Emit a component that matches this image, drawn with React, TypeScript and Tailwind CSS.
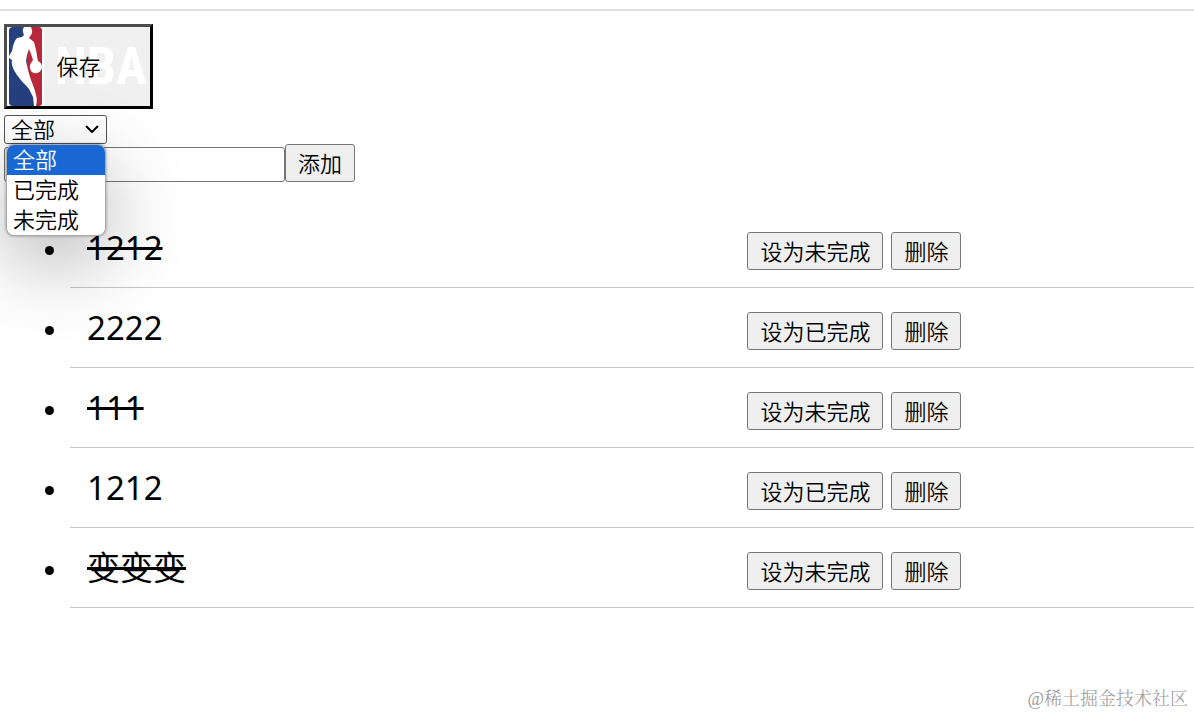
import { useState } from 'react'

const filters = ['全部', '已完成', '未完成']

const initialTodos = [
  { id: 1, text: '1212', done: true },
  { id: 2, text: '2222', done: false },
  { id: 3, text: '111', done: true },
  { id: 4, text: '1212', done: false },
  { id: 5, text: '变变变', done: true },
]

const buttonStyle =
  'rounded-[3px] border border-[#767676] bg-[#efefef] px-3 h-[38px] leading-[36px] text-[22px] hover:bg-[#e5e5e5]'

function NbaLogo() {
  return (
    <svg viewBox="0 0 33 79" className="h-full w-[33px] shrink-0" aria-hidden="true">
      <clipPath id="badge">
        <rect width="33" height="79" rx="4" />
      </clipPath>
      <g clipPath="url(#badge)">
        <rect width="33" height="79" fill="#253f7f" />
        <path d="M17 0H33V79H27L18 45Z" fill="#b9283a" />
        <path
          d="M15 0C13 3 14 5 15 8L13 10L8 11C5 14 4 19 3 24L0 29V31L3 33C2 37 4 42 8 48C12 54 16 57 20 62L24 70L25 79H27C28 75 28 71 27 68C26 63 24 58 22 53C21 50 20 47 19 43L17 34L18 28L20 22L22 27L24 33L22 36C20 39 21 43 23 45C27 48 33 45 33 40C33 37 31 35 29 34C28 31 28 27 27 23L25 15L20 11L22 8C24 5 23 3 22 0Z"
          fill="#fff"
        />
      </g>
    </svg>
  )
}

export default function App() {
  const [todos, setTodos] = useState(initialTodos)
  const [filter, setFilter] = useState('全部')
  const [open, setOpen] = useState(true)
  const [text, setText] = useState('')

  function addTodo() {
    if (!text) return
    setTodos([...todos, { id: Date.now(), text, done: false }])
    setText('')
  }

  function toggleTodo(id: number) {
    setTodos(todos.map((t) => (t.id === id ? { ...t, done: !t.done } : t)))
  }

  const visible = todos.filter((t) => filter === '全部' || t.done === (filter === '已完成'))

  return (
    <div className="flex min-h-screen flex-col bg-white pt-[9px] font-['Noto_Sans','Noto_Sans_CJK_SC',sans-serif] text-[22px] font-[350] text-black">
      <hr className="border-t-2 border-[#dedede]" />

      <div className="flex flex-col items-start px-1 pt-[13px]">
        <button
          type="button"
          className="relative h-[85px] w-[149px] overflow-hidden border-[3px] border-t-[#4c4c4c] border-r-black border-b-black border-l-[#4c4c4c] bg-white"
        >
          <span className="absolute inset-0 flex pl-0.5">
            <NbaLogo />
            <span
              className="ml-0.5 flex flex-1 items-center justify-center bg-[#f0f0f0] pl-2 font-['Liberation_Sans_Narrow','Roboto_Condensed','DejaVu_Sans_Condensed',sans-serif] text-[52px] leading-none font-bold text-white"
              aria-hidden="true"
            >
              NBA
            </span>
          </span>
          <span className="relative">保存</span>
        </button>

        <div className="relative mt-1.5">
          <select
            aria-label="筛选"
            value={filter}
            onChange={(e) => setFilter(e.target.value)}
            onClick={() => setOpen(!open)}
            className="block h-[29px] w-[103px] appearance-none rounded-[3px] border border-[#555] bg-white pb-[3px] pl-1.5 leading-[26px]"
          >
            {filters.map((name) => (
              <option key={name}>{name}</option>
            ))}
          </select>
          <svg viewBox="0 0 14 8" className="pointer-events-none absolute top-2.5 right-2 h-2 w-3.5" aria-hidden="true">
            <path d="M1 1L7 7L13 1" fill="none" stroke="#000" strokeWidth="2" />
          </svg>
          {open && (
            <ul
              role="listbox"
              aria-label="筛选选项"
              className="absolute top-[29px] left-0.5 z-10 w-[100px] overflow-hidden rounded-lg border border-[#aaa] bg-white shadow-[0_0_3px_rgba(0,0,0,0.4),0_24px_80px_rgba(0,0,0,0.3)]"
            >
              {filters.map((name) => (
                <li
                  key={name}
                  role="option"
                  aria-selected={name === filter}
                  onClick={() => {
                    setFilter(name)
                    setOpen(false)
                  }}
                  className="h-[30px] pl-1.5 leading-[28px] aria-selected:bg-[#1967d2] aria-selected:text-white"
                >
                  {name}
                </li>
              ))}
            </ul>
          )}
        </div>

        <div className="flex items-end">
          <input
            type="text"
            aria-label="新任务"
            value={text}
            onChange={(e) => setText(e.target.value)}
            className="h-[35px] w-[281px] rounded-[3px] border border-[#767676] bg-white px-1"
          />
          <button type="button" className={buttonStyle} onClick={addTodo}>
            添加
          </button>
        </div>
      </div>

      <ul className="mt-[26px] pl-[70px]">
        {visible.map((todo) => (
          <li key={todo.id} className="relative flex h-20 items-center border-b border-[#c8c8c8] pt-1.5">
            <span className="absolute -left-[25px] size-[9px] rounded-full bg-black" />
            <span className="w-3/5 pb-1.5 pl-[17px] text-[33px] leading-[44px] font-normal">
              <span className={todo.done ? 'line-through decoration-[3px]' : ''}>{todo.text}</span>
            </span>
            <div className="flex gap-2 pl-[3px]">
              <button type="button" className={buttonStyle} onClick={() => toggleTodo(todo.id)}>
                {todo.done ? '设为未完成' : '设为已完成'}
              </button>
              <button
                type="button"
                className={buttonStyle}
                onClick={() => setTodos(todos.filter((t) => t.id !== todo.id))}
              >
                删除
              </button>
            </div>
          </li>
        ))}
      </ul>

      <footer className="mt-auto pr-1.5 pb-[3px] text-right font-['Liberation_Serif','Noto_Serif_CJK_SC','Noto_Sans_CJK_SC',serif] text-[18px] leading-[26px] font-light text-[#999]">
        @稀土掘金技术社区
      </footer>
    </div>
  )
}
